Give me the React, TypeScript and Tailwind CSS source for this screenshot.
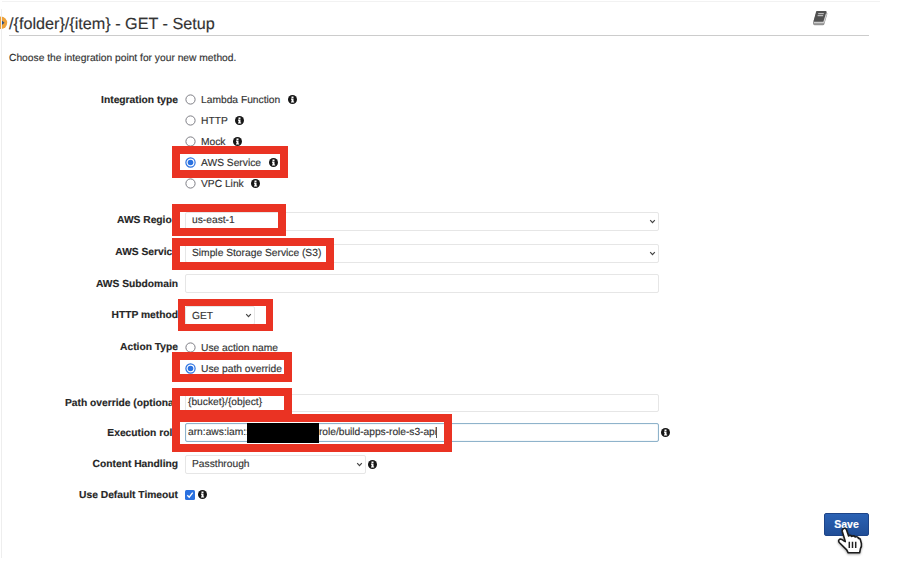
import type { ReactNode } from "react";

function Info({ className = "" }: { className?: string }) {
  return (
    <svg className={`h-[9px] w-[9px] shrink-0 ${className}`} viewBox="0 0 18 18">
      <circle cx="9" cy="9" r="9" fill="#161616" />
      <path d="M7 3h4v3H7zM6 7.2h5v5.6h1.3V15H6v-2.2h1.2V9.4H6z" fill="#fff" />
    </svg>
  );
}

function Chevron({ className = "" }: { className?: string }) {
  return (
    <svg className={`h-[5px] w-[7px] shrink-0 ${className}`} viewBox="0 0 7 5" fill="none">
      <path d="M1.2 1.2 3.5 3.6 5.8 1.2" stroke="#444" strokeWidth="1.2" />
    </svg>
  );
}

function Radio({ label, checked = false, info = true }: { label: string; checked?: boolean; info?: boolean }) {
  return (
    <div className="flex h-[21px] items-center">
      <svg className="h-[11px] w-[11px] shrink-0" viewBox="0 0 11 11">
        <circle cx="5.5" cy="5.5" r="4.6" fill="#fff" stroke={checked ? "#2a71e0" : "#7d7d84"} strokeWidth={checked ? 1.2 : 1} />
        {checked && <circle cx="5.5" cy="5.5" r="2.8" fill="#2a71e0" />}
      </svg>
      <span className="ml-[5px] pt-[1px]">{label}</span>
      {info && <Info className="ml-[7.5px]" />}
    </div>
  );
}

function Row({ label, className, labelClass = "", children }: { label: string; className: string; labelClass?: string; children: ReactNode }) {
  return (
    <div className={`flex ${className}`}>
      <div className={`flex w-[178px] shrink-0 items-center justify-end font-bold text-[#262626] ${labelClass}`}>{label}</div>
      <div className="ml-[7px] flex items-center">{children}</div>
    </div>
  );
}

const field = "flex h-full items-center rounded-[2px] border border-[#e6e6e6] bg-white";

function Mark({ className }: { className: string }) {
  return <div className={`absolute border-[#ea3323] ${className}`} />;
}

export default function App() {
  return (
    <div className="relative h-[588px] w-[902px] overflow-hidden whitespace-nowrap bg-white font-['Liberation_Sans',Arial,sans-serif] text-[10.25px] leading-[13px] text-[#333] [text-rendering:geometricPrecision] [-webkit-text-stroke:0.15px]">
      <div className="ml-[2px] h-[2px] w-[878px] border-b border-[#f2f2f2]" />
      <div className="flex h-[34px] w-[869px] items-center">
        <svg className="mt-[14px] h-[14px] w-[8px] shrink-0 self-start" viewBox="0 0 8 14">
          <circle cx="1" cy="6.8" r="6.2" fill="#eda23b" />
          <path d="M1 3.8 4.5 6.8 1 9.8z" fill="#2c4f82" />
        </svg>
        <div className="ml-[1px] flex h-full flex-1 items-center border-b border-[#ccc]">
          <h1 className="mt-[11px] text-[16.2px] leading-[20px]">/{"{folder}"}/{"{item}"} - GET - Setup</h1>
          <svg className="ml-auto mr-[41px] h-[16px] w-[16px] -translate-y-px" viewBox="0 0 16 16">
            <path d="M4.7 1.2h9.8l.9 2.6-3 10.2q-.3 1.2-1.6 1.2H2.4Q.4 14.8 1 12.6z" fill="#929292" />
            <path d="M5 1h8.6q.9 0 .6 1.1l-2.8 9.4H1.5L4 2q.2-1 1-1z" fill="#515151" />
            <path d="M6.2 3.7h5.6M5.6 5.7h5.6" stroke="#d2d2d2" strokeWidth="1" />
            <path d="M2 12.7h9.7l2.8-9" stroke="#ddd" strokeWidth="1" fill="none" />
          </svg>
        </div>
      </div>
      <p className="ml-[9px] mt-[16px]">Choose the integration point for your new method.</p>

      <form className="mt-[24px]">
        <Row label="Integration type" className="h-[105px]" labelClass="h-[21px] pt-[1px]">
          <div>
            <Radio label="Lambda Function" />
            <Radio label="HTTP" />
            <Radio label="Mock" />
            <Radio label="AWS Service" checked />
            <Radio label="VPC Link" />
          </div>
        </Row>
        <Row label="AWS Region" className="mt-[18px] h-[19px]" labelClass="pb-[3px]">
          <div className={`${field} w-[474px] pl-[6px] pr-[2px]`}>
            <span className="-mt-[2px]">us-east-1</span><Chevron className="ml-auto" />
          </div>
        </Row>
        <Row label="AWS Service" className="mt-[13px] h-[19px]" labelClass="pb-[3px]">
          <div className={`${field} w-[474px] pl-[6px] pr-[2px]`}>
            <span className="-mt-[1px]">Simple Storage Service (S3)</span><Chevron className="ml-auto" />
          </div>
        </Row>
        <Row label="AWS Subdomain" className="mt-[11px] h-[19px]" labelClass="pt-[1px]">
          <div className={`${field} w-[474px]`} />
        </Row>
        <Row label="HTTP method" className="mt-[13px] h-[19px]" labelClass="pb-[1px]">
          <div className={`${field} w-[70px] pl-[6px] pr-[2px]`}>
            <span className="pt-[1px]">GET</span><Chevron className="ml-auto" />
          </div>
        </Row>
        <Row label="Action Type" className="mt-[12px] h-[42px]" labelClass="h-[21px]">
          <div>
            <Radio label="Use action name" info={false} />
            <Radio label="Use path override" checked info={false} />
          </div>
        </Row>
        <Row label="Path override (optional)" className="mt-[15px] h-[18px]" labelClass="w-[180px]! -mr-[2px] pt-[1px]">
          <div className={`${field} w-[474px] pl-[2px]`}><span className="-mt-[2px]">{"{bucket}/{object}"}</span></div>
        </Row>
        <Row label="Execution role" className="mt-[11px] h-[19px]" labelClass="pt-[1px]">
          <div className="flex h-full w-[474px] items-center rounded-[2px] border border-[#8fb3cb] pl-[2px] shadow-[inset_0_0_1px_#8fb3cb]">
            <span className="w-[59px]">arn:aws:iam::</span>
            <span className="h-[20px] w-[72px] shrink-0 bg-black" />
            <span className="tracking-[-0.04px]">role/build-apps-role-s3-api</span>
            <span className="-ml-px h-[11px] w-px bg-[#555]" />
          </div>
          <Info className="ml-[2px]" />
        </Row>
        <Row label="Content Handling" className="mt-[13px] h-[19px]" labelClass="pb-[1px]">
          <div className={`${field} w-[181px] pl-[6px] pr-[2px]`}>
            <span>Passthrough</span><Chevron className="ml-auto" />
          </div>
          <Info className="ml-[2px]" />
        </Row>
        <Row label="Use Default Timeout" className="mt-[11px] h-[19px]" labelClass="pt-[2px]">
          <svg className="h-[10px] w-[10px]" viewBox="0 0 10 10">
            <rect width="10" height="10" rx="1.5" fill="#2a71e0" />
            <path d="M2.3 5.3 4.2 7.2 7.7 2.7" stroke="#fff" strokeWidth="1.3" fill="none" />
          </svg>
          <Info className="ml-[3px]" />
        </Row>
      </form>

      <div className="mt-[9px] flex w-[869px] justify-end">
        <button className="h-[23px] w-[45px] rounded-[2px] border border-[#1d4488] bg-linear-to-b from-[#2b62b4] to-[#204e97] text-[10.5px] font-bold text-white">Save</button>
      </div>

      <div className="absolute left-px top-[9px] h-[549px] w-px bg-[#eeeeee]" />

      <Mark className="left-[172px] top-[146px] h-[32px] w-[116px] border-8" />
      <Mark className="left-[172px] top-[204px] h-[32px] w-[114px] border-8" />
      <Mark className="left-[172px] top-[238px] h-[32px] w-[162px] border-8" />
      <Mark className="left-[178px] top-[299px] h-[32px] w-[95px] border-7" />
      <Mark className="left-[172px] top-[352px] h-[30px] w-[120px] border-8" />
      <Mark className="left-[172px] top-[388px] h-[30px] w-[120px] border-8" />
      <Mark className="left-[172px] top-[414px] h-[38px] w-[280px] border-8" />

      <svg className="absolute left-[837px] top-[527px] h-[27px] w-[26px] drop-shadow-[0_1px_1px_rgba(0,0,0,.35)]" viewBox="0 0 26 27">
        <path d="M6.300 1.700Q8.200.500 9.400 2.600l2.200 6.300q1.800-1.300 3.200.5 1.900-1.200 3.400.6 2.500-1 3.300 1.500.8-.4 1.700.6l1.200 4.400q.4 3-.9 4.900l-.9 4.400H11.200l-1.500-2.900-7.200-7.100q-1.900-2.200.1-3.500 1.800-.7 3.800 1.200l1.900 1.100L5.200 4.200Q4.900 2.500 6.300 1.700z" fill="#fff" stroke="#1c1c1c" strokeWidth="1.600" strokeLinejoin="round" />
        <path d="M12.300 14.800v6.200M15.500 14.800v6.200M18.700 14.800v6.200" stroke="#222" strokeWidth="1.500" />
      </svg>
    </div>
  );
}
